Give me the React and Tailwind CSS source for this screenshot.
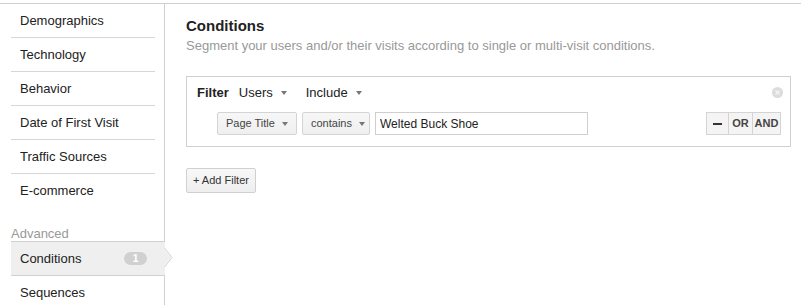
const NAV = ['Demographics', 'Technology', 'Behavior', 'Date of First Visit', 'Traffic Sources'];

function Caret({ gap = 'ml-[7px]' }) {
  return <span className={`${gap} inline-block h-0 w-0 border-x-[3.5px] border-t-[4px] border-x-transparent border-t-[#777] align-middle`} />;
}

function SelectButton({ label, width }) {
  return (
    <button className={`flex h-[23px] ${width} items-center justify-between rounded-[2px] border border-[#d4d4d4] bg-gradient-to-b from-[#f7f7f7] to-[#efefef] pl-[8px] pr-[8px] text-[11px] text-[#444]`}>
      <span>{label}</span>
      <Caret />
    </button>
  );
}

export default function App() {
  return (
    <div className="h-[305px] w-[801px] overflow-hidden bg-white font-['Liberation_Sans',Arial,sans-serif] text-[13px] text-[#222]">
      <div className="h-[3px]" />
      <div className="flex h-[302px] border-t border-[#cfcfcf]">
        <aside className="relative w-[165px] shrink-0 border-r border-[#d0d0d0] pl-[11px]">
          <ul className="w-[144px]">
            {NAV.map((n) => (
              <li key={n} className="flex h-[34px] items-center border-b border-[#d6d6d6] pl-[9px]">{n}</li>
            ))}
            <li className="flex h-[33px] items-center pl-[9px]">E-commerce</li>
          </ul>
          <div className="mt-[19px] h-[15px] leading-[15px] text-[#999]">Advanced</div>
          <div className="relative -mr-px flex h-[35px] items-center justify-between border-y border-[#d0d0d0] bg-[#efefef] pl-[9px] pr-[18px]">
            <span>Conditions</span>
            <span className="flex h-[13px] w-[23px] items-center justify-center rounded-full bg-[#d0d0d0] text-[11px] font-bold leading-none text-white">1</span>
            <svg className="absolute -right-[8px] top-[6px]" width="9" height="19" viewBox="0 0 9 19">
              <path d="M0.5 0 L8 9.5 L0.5 19" fill="#fff" stroke="#d0d0d0" />
              <path d="M0 1 L7.2 9.5 L0 18 Z" fill="#efefef" />
            </svg>
          </div>
          <div className="flex h-[34px] items-center pl-[9px]">Sequences</div>
        </aside>

        <main className="flex-1 pl-[21px] pr-[10px]">
          <h2 className="mt-[13px] text-[15px] font-bold leading-[18px] text-[#222]">Conditions</h2>
          <p className="mt-[3px] leading-[16px] text-[#999]">Segment your users and/or their visits according to single or multi-visit conditions.</p>

          <div className="mt-[22px] h-[71px] w-[605px] border border-[#d0d0d0] pl-[10px] pr-[9px]">
            <div className="flex h-[28px] items-center pt-[3px]">
              <span className="font-bold">Filter</span>
              <span className="ml-[10px] flex items-center">Users<Caret gap="ml-[8px]" /></span>
              <span className="ml-[19px] flex items-center">Include<Caret gap="ml-[8px]" /></span>
              <svg className="-mr-[2px] ml-auto" width="11" height="11" viewBox="0 0 11 11">
                <circle cx="5.5" cy="5.5" r="5.5" fill="#dcdcdc" />
                <path d="M3.5 3.5 L7.5 7.5 M7.5 3.5 L3.5 7.5" stroke="#f4f4f4" strokeWidth="1.3" />
              </svg>
            </div>
            <div className="mt-[7px] flex items-center pl-[20px]">
              <SelectButton label="Page Title" width="w-[80px]" />
              <div className="ml-[5px]"><SelectButton label="contains" width="w-[68px]" /></div>
              <input
                readOnly
                value="Welted Buck Shoe"
                className="ml-[5px] h-[23px] w-[213px] border border-[#cfcfcf] px-[4px] text-[12px] text-[#222] outline-none"
              />
              <div className="ml-auto flex h-[23px] text-[11px] font-bold text-[#444]">
                <button className="flex w-[23px] items-center justify-center border border-[#d4d4d4] bg-[#f4f4f4]">
                  <span className="block h-[2px] w-[9px] bg-[#333]" />
                </button>
                <button className="w-[23px] border-y border-[#d4d4d4] bg-[#f4f4f4]">OR</button>
                <button className="w-[29px] border border-[#d4d4d4] bg-[#f4f4f4]">AND</button>
              </div>
            </div>
          </div>

          <button className="mt-[21px] h-[25px] rounded-[2px] border border-[#d0d0d0] bg-gradient-to-b from-[#f8f8f8] to-[#eeeeee] px-[6px] text-[11px] text-[#333]">
            + Add Filter
          </button>
        </main>
      </div>
    </div>
  );
}
